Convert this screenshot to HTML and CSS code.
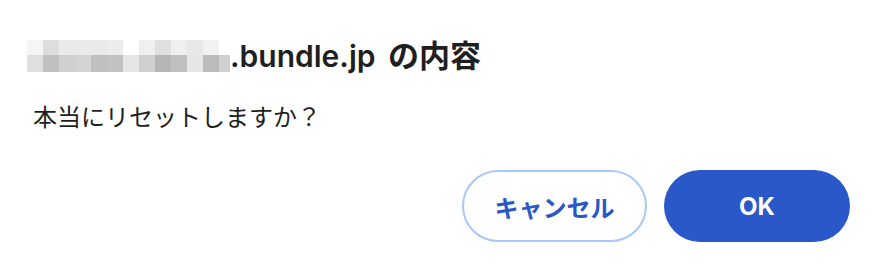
FILE: index.html
```html
<!DOCTYPE html>
<html lang="ja">
<head>
<meta charset="utf-8">
<title>Dialog</title>
<link rel="stylesheet" href="styles.css">
</head>
<body>
<div class="dialog">
  <div class="title">
    <div class="mosaic" aria-hidden="true">
      <span class="c-f5"></span><span class="c-dd"></span><span class="c-ea"></span><span class="c-ea"></span><span class="c-ea"></span><span class="c-ec"></span><span class="c-ff"></span><span class="c-ef"></span><span class="c-e0"></span><span class="c-ef"></span><span class="c-e8"></span><span class="c-f2"></span><span class="c-ff"></span>
      <span class="c-df"></span><span class="c-c0"></span><span class="c-cf"></span><span class="c-d3"></span><span class="c-c0"></span><span class="c-c2"></span><span class="c-e5"></span><span class="c-d0"></span><span class="c-b5"></span><span class="c-c0"></span><span class="c-e6"></span><span class="c-bb"></span><span class="c-d0"></span>
    </div>
    <h1 class="host">.bundle.jp <span class="host-suffix">の内容</span></h1>
  </div>
  <p class="message">本当にリセットしますか？</p>
  <div class="actions">
    <button class="btn btn-cancel">キャンセル</button>
    <button class="btn btn-ok">OK</button>
  </div>
</div>
</body>
</html>
```
FILE: styles.css
```css
html, body {
  margin: 0;
  padding: 0;
  background: #ffffff;
}
body {
  font-family: "Inter", "Noto Sans CJK JP", sans-serif;
  color: #1f1f1f;
}
.dialog {
  padding: 40px 34px 34px 27px;
}
.title {
  display: flex;
  align-items: flex-start;
  height: 32px;
}
.mosaic {
  display: grid;
  grid-template-columns: repeat(12, 16px) 11px;
  grid-template-rows: 15px 17px;
  width: 203px;
  flex: none;
}
.mosaic span { display: block; }
.c-f5 { background: #f5f5f5; }
.c-dd { background: #dddddd; }
.c-ea { background: #eaeaea; }
.c-ec { background: #ececec; }
.c-ff { background: #ffffff; }
.c-ef { background: #efefef; }
.c-e0 { background: #e0e0e0; }
.c-e8 { background: #e8e8e8; }
.c-f2 { background: #f2f2f2; }
.c-df { background: #dfdfdf; }
.c-c0 { background: #c0c0c0; }
.c-cf { background: #cfcfcf; }
.c-d3 { background: #d3d3d3; }
.c-c2 { background: #c2c2c2; }
.c-e5 { background: #e5e5e5; }
.c-d0 { background: #d0d0d0; }
.c-b5 { background: #b5b5b5; }
.c-e6 { background: #e6e6e6; }
.c-bb { background: #bbbbbb; }
.host {
  margin: 0;
  font-size: 30px;
  font-weight: 600;
  line-height: 32px;
  white-space: nowrap;
  color: #1f1f1f;
}
.host-suffix {
  margin-left: 5px;
  font-size: 31px;
}
.message {
  margin: 29px 0 0 6px;
  font-size: 24px;
  line-height: 30px;
  font-family: "Noto Sans CJK JP", sans-serif;
  color: #1f1f1f;
}
.actions {
  display: flex;
  justify-content: flex-end;
  gap: 17px;
  margin-top: 39px;
}
.btn {
  height: 72px;
  border-radius: 36px;
  font-family: "Inter", "Noto Sans CJK JP", sans-serif;
  font-size: 24px;
  font-weight: 700;
  padding: 0;
  cursor: pointer;
}
.btn-cancel {
  width: 185px;
  background: #ffffff;
  border: 2px solid #a8c7fa;
  color: #2a58c9;
}
.btn-ok {
  width: 186px;
  background: #2a58c9;
  border: none;
  color: #ffffff;
}
```
